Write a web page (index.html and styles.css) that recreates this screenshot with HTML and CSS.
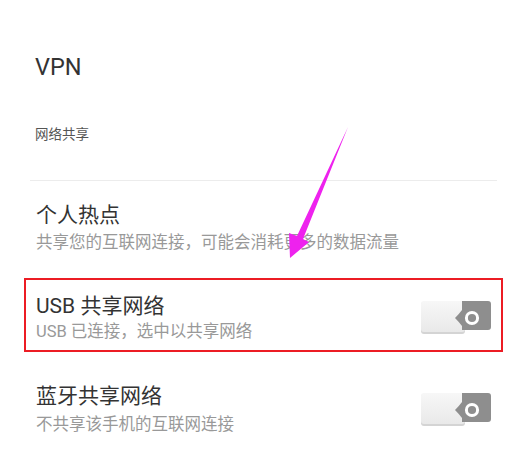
FILE: index.html
```html
<!DOCTYPE html>
<html lang="zh-CN">
<head>
<meta charset="utf-8">
<link rel="stylesheet" href="styles.css">
</head>
<body>
<div class="page">
  <div class="vpn">VPN</div>
  <div class="section">网络共享</div>
  <div class="sep"></div>
  <div class="item first">
    <div class="texts">
      <div class="title">个人热点</div>
      <div class="sub">共享您的互联网连接，可能会消耗更多的数据流量</div>
    </div>
  </div>
  <div class="item usb">
    <div class="texts">
      <div class="title">USB 共享网络</div>
      <div class="sub">USB 已连接，选中以共享网络</div>
    </div>
    <svg class="toggle" viewBox="0 0 70 33" width="70" height="33">
      <defs>
        <linearGradient id="lg" x1="0" y1="0" x2="0" y2="1">
          <stop offset="0" stop-color="#f7f7f7"/>
          <stop offset="1" stop-color="#e9e9e9"/>
        </linearGradient>
      </defs>
      <rect x="0" y="1" width="44" height="32" rx="3" fill="#d4d4d4"/>
      <rect x="0" y="0" width="44" height="31" rx="3" fill="url(#lg)"/>
      <path d="M41 0 H67 Q70 0 70 3 V26 Q70 29 67 29 H41 V25 Q38 21 34 17 Q38 13 41 9 Z" fill="#8e8e8e"/>
      <circle cx="51" cy="17" r="5.6" fill="none" stroke="#fff" stroke-width="3"/>
    </svg>
  </div>
  <div class="item bt">
    <div class="texts">
      <div class="title">蓝牙共享网络</div>
      <div class="sub">不共享该手机的互联网连接</div>
    </div>
    <svg class="toggle" viewBox="0 0 70 33" width="70" height="33">
      <defs>
        <linearGradient id="lg2" x1="0" y1="0" x2="0" y2="1">
          <stop offset="0" stop-color="#f7f7f7"/>
          <stop offset="1" stop-color="#e9e9e9"/>
        </linearGradient>
      </defs>
      <rect x="0" y="1" width="44" height="32" rx="3" fill="#d4d4d4"/>
      <rect x="0" y="0" width="44" height="31" rx="3" fill="url(#lg2)"/>
      <path d="M41 0 H67 Q70 0 70 3 V26 Q70 29 67 29 H41 V25 Q38 21 34 17 Q38 13 41 9 Z" fill="#8e8e8e"/>
      <circle cx="51" cy="17" r="5.6" fill="none" stroke="#fff" stroke-width="3"/>
    </svg>
  </div>
  <svg class="arrow" viewBox="0 0 521 464" width="521" height="464">
    <polygon points="348,127 303,239 309,242 290,258 289,233 297,236" fill="#ee22ee"/>
  </svg>
</div>
</body>
</html>
```

FILE: styles.css
```css
html, body {
  margin: 0;
  padding: 0;
  background: #fff;
}
.page {
  position: relative;
  width: 521px;
  height: 464px;
  overflow: hidden;
  font-family: "Roboto", "Noto Sans CJK SC", sans-serif;
  color: #333;
}
.vpn {
  padding-top: 52px;
  padding-left: 35px;
  font-size: 23.5px;
  line-height: 30px;
}
.section {
  margin-top: 42px;
  padding-left: 35px;
  font-size: 13.5px;
  line-height: 20px;
  color: #555;
}
.sep {
  margin-top: 36px;
  margin-left: 30px;
  width: 467px;
  height: 1px;
  background: #ececec;
}
.item {
  box-sizing: border-box;
  display: flex;
  align-items: center;
  justify-content: space-between;
  margin-left: 24px;
  width: 479px;
  border: 2px solid transparent;
  padding: 12px 10px 7px 10px;
}
.item.first {
  margin-top: 6px;
}
.item.usb {
  margin-top: 15px;
  border-color: #ec1c24;
}
.item.bt {
  margin-top: 16px;
}
.title {
  font-size: 21px;
  line-height: 28px;
  color: #333;
}
.sub {
  margin-top: 3px;
  font-size: 16.5px;
  line-height: 22px;
  color: #999;
}
.usb .sub {
  margin-top: 1px;
}
.bt .sub {
  margin-top: 4px;
}
.toggle {
  display: block;
  flex: none;
}
.arrow {
  position: absolute;
  left: 0;
  top: 0;
  pointer-events: none;
}
```
